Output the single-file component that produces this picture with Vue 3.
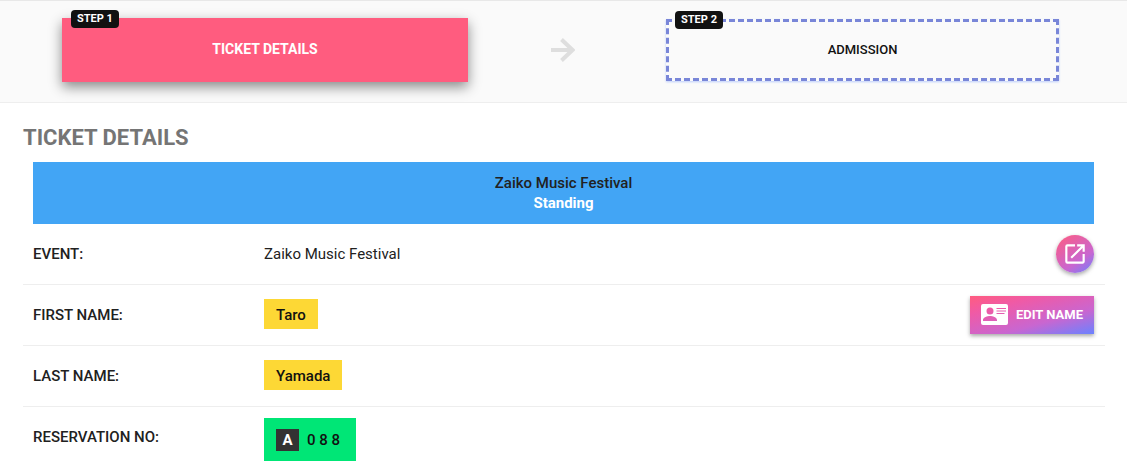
<script setup>
const rows = [
  { label: 'EVENT:', value: 'Zaiko Music Festival', kind: 'plain', action: 'open' },
  { label: 'FIRST NAME:', value: 'Taro', kind: 'tag', action: 'edit' },
  { label: 'LAST NAME:', value: 'Yamada', kind: 'tag' },
  { label: 'RESERVATION NO:', value: '0 8 8', kind: 'number', prefix: 'A' },
]
</script>

<template>
  <div class="page">
    <nav class="steps" aria-label="Steps">
      <button type="button" class="step active" aria-current="step">
        <span class="badge">STEP 1</span>
        TICKET DETAILS
      </button>
      <svg class="arrow" viewBox="0 0 24 24" aria-hidden="true">
        <path d="M0 12H21M10.5 1.5L21.5 12L10.5 22.5" fill="none" stroke="currentColor" stroke-width="4" />
      </svg>
      <button type="button" class="step next">
        <span class="badge">STEP 2</span>
        ADMISSION
      </button>
    </nav>

    <main class="content">
      <h1 class="title">TICKET DETAILS</h1>
      <div class="banner">
        <div class="banner-name">Zaiko Music Festival</div>
        <div class="banner-type">Standing</div>
      </div>

      <dl class="rows">
        <div v-for="row in rows" :key="row.label" class="row">
          <dt class="label">{{ row.label }}</dt>
          <dd class="value">
            <span v-if="row.kind === 'plain'">{{ row.value }}</span>
            <span v-else-if="row.kind === 'tag'" class="tag">{{ row.value }}</span>
            <span v-else class="number">
              <span class="prefix">{{ row.prefix }}</span>
              <span>{{ row.value }}</span>
            </span>
          </dd>
          <dd v-if="row.action" class="action">
            <a v-if="row.action === 'open'" href="#" class="open" aria-label="Open event">
              <svg viewBox="0 0 24 24" aria-hidden="true">
                <path fill="currentColor" d="M19 19H5V5h7V3H5a2 2 0 0 0-2 2v14a2 2 0 0 0 2 2h14c1.1 0 2-.9 2-2v-7h-2v7zM14 3v2h3.59l-9.83 9.83 1.41 1.41L19 6.41V10h2V3h-7z" />
              </svg>
            </a>
            <button v-else type="button" class="edit">
              <svg viewBox="0 0 27 21" aria-hidden="true">
                <path fill="currentColor" fill-rule="evenodd" d="M2 0H25A2 2 0 0 1 27 2V19A2 2 0 0 1 25 21H2A2 2 0 0 1 0 19V2A2 2 0 0 1 2 0ZM9 3.5A3.5 3.5 0 1 0 9 10.5A3.5 3.5 0 1 0 9 3.5ZM2 17H16V16C16 13.4 11.5 12 9 12S2 13.4 2 16ZM15.5 4V5H25V4ZM15.5 6.5V7.5H25V6.5ZM15.5 9V10H23.5V9Z" />
              </svg>
              EDIT NAME
            </button>
          </dd>
        </div>
      </dl>
    </main>
  </div>
</template>

<style>
body {
  margin: 0;
  background: #fff;
}
</style>

<style scoped>
.page {
  font-family: Roboto, "Liberation Sans", sans-serif;
  font-size: 15px;
  color: #212121;
}
.steps {
  display: grid;
  grid-template-columns: 406fr 190fr 401fr;
  align-items: center;
  justify-items: center;
  padding: 17px 68px 20px 62px;
  background: #fafafa;
  border-top: 1px solid #e8e8e8;
  border-bottom: 1px solid #eee;
}
.step {
  position: relative;
  width: 100%;
  height: 62px;
  padding: 0 0 2px;
  box-sizing: border-box;
  border: 0;
  font-family: inherit;
  font-size: 13px;
  font-weight: 700;
  cursor: pointer;
}
.active {
  height: 64px;
  background: #ff5c7f;
  color: #fff;
  font-size: 14px;
  box-shadow: 0 5px 12px rgba(0, 0, 0, 0.45);
}
.next {
  justify-self: end;
  width: 98%;
  background: #fafafa;
  border: 3px dashed #7986d8;
  color: #111;
  font-weight: 500;
  box-shadow: 0 1px 2px rgba(100, 140, 255, 0.4);
}
.badge {
  position: absolute;
  top: -8px;
  left: 9px;
  padding: 0 6px;
  border-radius: 4px;
  background: #111;
  color: #fff;
  font-size: 11px;
  line-height: 18px;
  font-weight: 700;
}
.next .badge {
  top: -11px;
  left: 6px;
}
.arrow {
  width: 24px;
  height: 24px;
  color: #dedede;
}
.content {
  padding: 22px 22px 0 23px;
}
.title {
  margin: 0 0 11px;
  font-size: 22px;
  line-height: 26px;
  font-weight: 700;
  color: #757575;
}
.banner {
  margin: 0 11px 0 10px;
  padding: 11px 0;
  background: #42a5f5;
  text-align: center;
  line-height: 20px;
}
.banner-name {
  font-weight: 500;
}
.banner-type {
  color: #fff;
  font-weight: 700;
}
.rows {
  margin: 0;
}
.row {
  display: grid;
  grid-template-columns: 231px 1fr auto;
  align-items: start;
  padding: 11px 11px 11px 10px;
  border-bottom: 1px solid #eee;
  line-height: 38px;
}
.row:last-child {
  padding-bottom: 0;
  border-bottom: 0;
}
.label {
  font-weight: 500;
}
.value,
.action {
  margin: 0;
  display: flex;
}
.tag {
  margin-top: 3px;
  padding: 2px 12px 0;
  background: #fdd835;
  color: #111;
  line-height: 28px;
  font-weight: 500;
}
.number {
  display: flex;
  align-items: center;
  gap: 8px;
  padding: 11px 16px 10px 12px;
  background: #00e676;
  color: #111;
  line-height: 22px;
  font-weight: 500;
}
.prefix {
  width: 23px;
  background: #333;
  color: #fff;
  font-weight: 700;
  text-align: center;
}
.open,
.edit {
  display: flex;
  align-items: center;
  justify-content: center;
  height: 38px;
  color: #fff;
  background: linear-gradient(145deg, #ff5c7f 0%, #c966d0 65%, #6b82ff 100%);
  box-shadow: 0 2px 4px rgba(0, 0, 0, 0.35);
}
.open {
  width: 38px;
  border-radius: 50%;
}
.open svg {
  width: 26px;
  height: 26px;
}
.edit {
  gap: 8px;
  padding: 0 11px 2px;
  border: 0;
  background: linear-gradient(165deg, #ff5c7f 0%, #f05aa5 25%, #c966d0 65%, #6b82ff 100%);
  font-family: inherit;
  font-size: 13px;
  font-weight: 700;
  cursor: pointer;
}
.edit svg {
  width: 27px;
  height: 21px;
}
</style>
